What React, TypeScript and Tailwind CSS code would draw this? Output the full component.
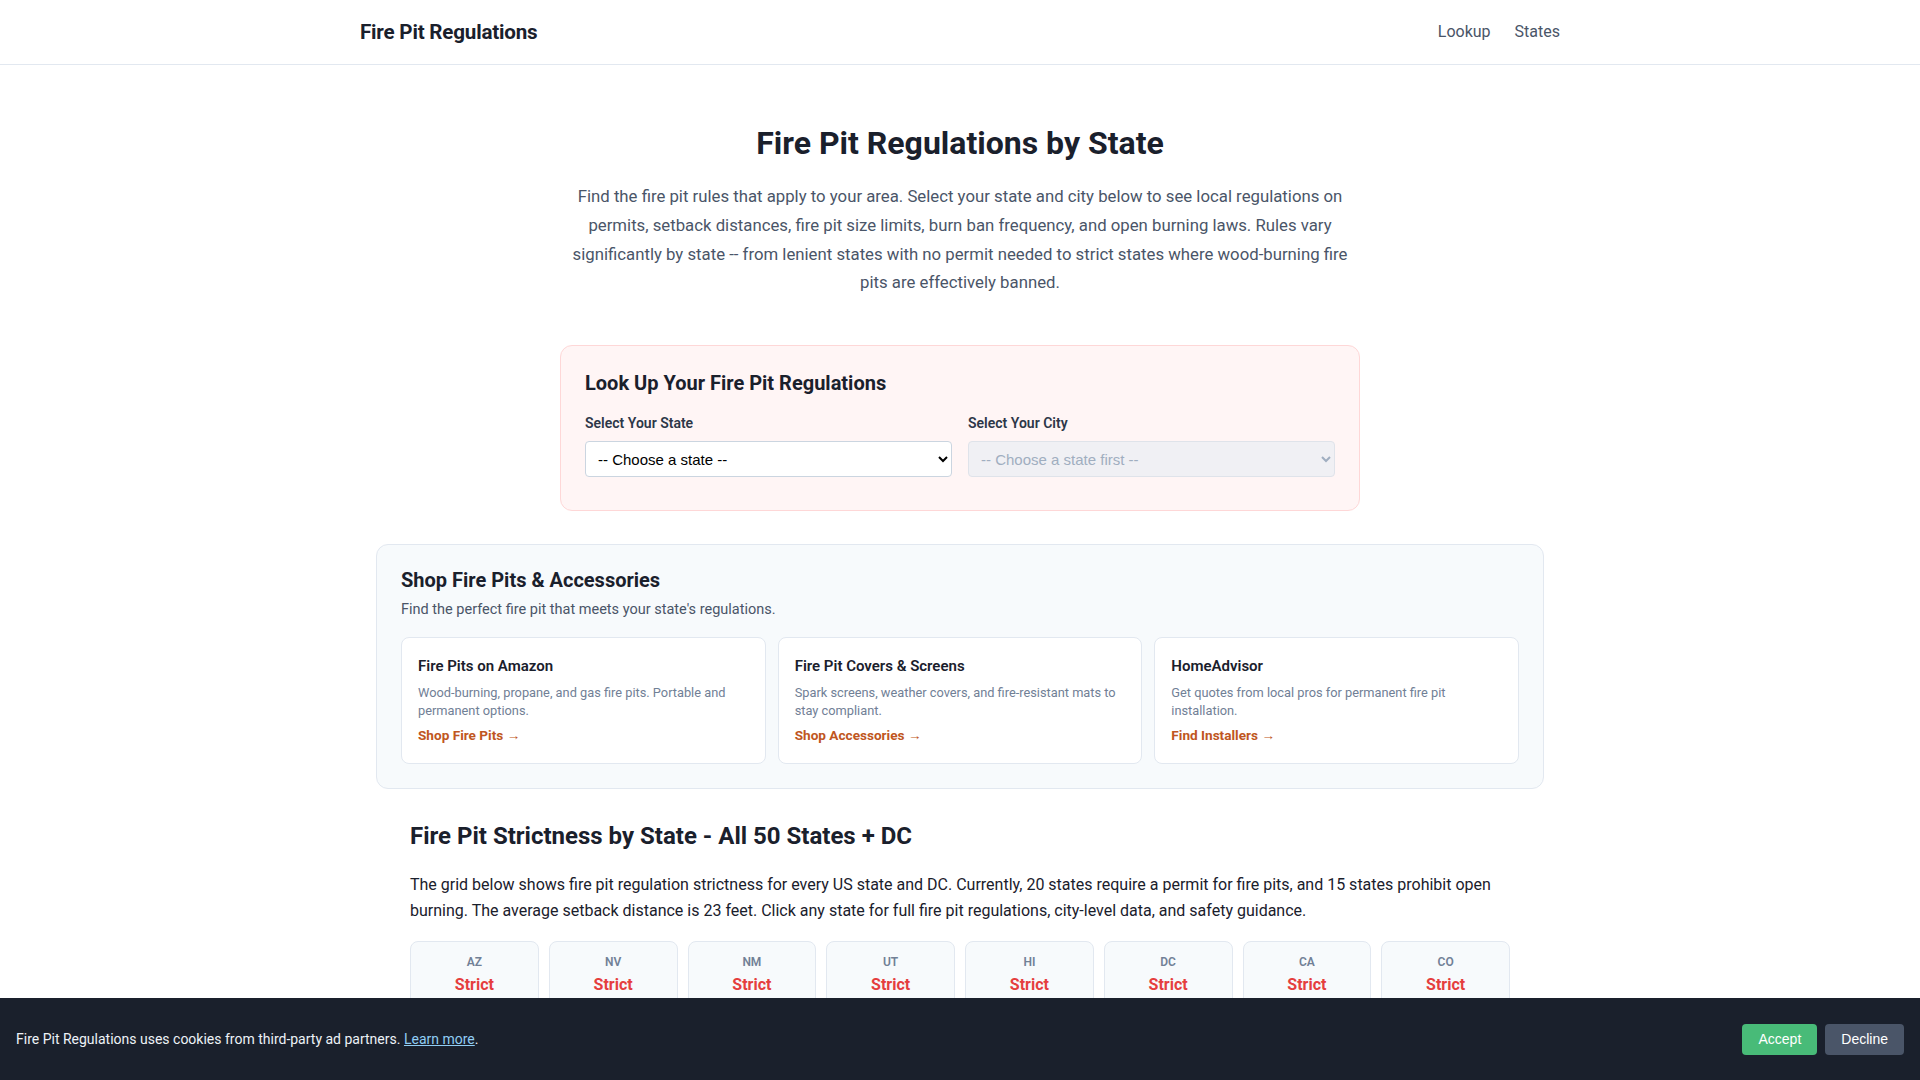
import React from "react";

const SHOP_CARDS = [
  {
    title: "Fire Pits on Amazon",
    body: "Wood-burning, propane, and gas fire pits. Portable and permanent options.",
    cta: "Shop Fire Pits",
  },
  {
    title: "Fire Pit Covers & Screens",
    body: "Spark screens, weather covers, and fire-resistant mats to stay compliant.",
    cta: "Shop Accessories",
  },
  {
    title: "HomeAdvisor",
    body: "Get quotes from local pros for permanent fire pit installation.",
    cta: "Find Installers",
  },
];

const STATES: { code: string; level: "Strict" | "Moderate" | "Lenient" }[] = [
  { code: "AZ", level: "Strict" },
  { code: "NV", level: "Strict" },
  { code: "NM", level: "Strict" },
  { code: "UT", level: "Strict" },
  { code: "HI", level: "Strict" },
  { code: "DC", level: "Strict" },
  { code: "CA", level: "Strict" },
  { code: "CO", level: "Strict" },
  { code: "OR", level: "Strict" },
  { code: "WA", level: "Strict" },
  { code: "ID", level: "Moderate" },
  { code: "MT", level: "Moderate" },
  { code: "WY", level: "Moderate" },
  { code: "TX", level: "Moderate" },
  { code: "OK", level: "Moderate" },
  { code: "KS", level: "Moderate" },
];

const levelColor = {
  Strict: "text-[#e53e3e]",
  Moderate: "text-[#dd6b20]",
  Lenient: "text-[#38a169]",
};

export default function App() {
  return (
    <div className="min-h-screen bg-white font-['Roboto',sans-serif] text-[#1a202c]">
      {/* top bar */}
      <header className="h-[65px] border-b border-[#e2e8f0]">
        <div className="mx-auto flex h-full max-w-[1200px] items-center justify-between">
          <span className="text-[20.6px] font-bold tracking-[-0.2px]">Fire Pit Regulations</span>
          <nav className="flex gap-6 text-base text-[#4a5568]">
            <a href="#lookup">Lookup</a>
            <a href="#states">States</a>
          </nav>
        </div>
      </header>

      <main className="mx-auto max-w-[1200px] px-4 pt-[58px] pb-32">
        <h1 className="text-center text-[32px] leading-10 font-bold">Fire Pit Regulations by State</h1>
        <p className="mx-auto mt-[19px] max-w-[780px] text-center text-[16.75px] leading-[28.8px] text-[#4a5568]">
          Find the fire pit rules that apply to your area. Select your state and city below to see local regulations on
          permits, setback distances, fire pit size limits, burn ban frequency, and open burning laws. Rules vary
          significantly by state -- from lenient states with no permit needed to strict states where wood-burning fire
          pits are effectively banned.
        </p>

        {/* lookup box */}
        <section
          id="lookup"
          className="mx-auto mt-12 max-w-[800px] rounded-xl border border-[#fed7d7] bg-[#fff5f5] px-6 pt-[23px] pb-[33px]"
        >
          <h2 className="text-[20px] leading-7 font-bold">Look Up Your Fire Pit Regulations</h2>
          <div className="mt-[16px] grid grid-cols-2 gap-4">
            <div>
              <label className="block text-sm leading-5 font-semibold text-[#2d3748]">Select Your State</label>
              <select className="mt-[8px] h-9 w-full rounded border border-[#cbd5e0] bg-white px-2 font-['Liberation_Sans',Arial,sans-serif] text-[15px] text-black">
                <option>-- Choose a state --</option>
              </select>
            </div>
            <div>
              <label className="block text-sm leading-5 font-semibold text-[#2d3748]">Select Your City</label>
              <select
                disabled
                className="mt-[8px] h-9 w-full rounded border border-[#dfe3ea] bg-[#f0f0f4] px-2 font-['Liberation_Sans',Arial,sans-serif] text-[15px] text-[#a0aec0]"
              >
                <option>-- Choose a state first --</option>
              </select>
            </div>
          </div>
        </section>

        {/* affiliate block */}
        <section className="mt-[33px] rounded-xl border border-[#e2e8f0] bg-[#f7fafc] px-6 pt-[23px] pb-6">
          <h2 className="text-[20px] leading-6 font-bold">Shop Fire Pits &amp; Accessories</h2>
          <p className="mt-[8px] text-[14.5px] leading-5 text-[#4a5568]">
            Find the perfect fire pit that meets your state's regulations.
          </p>
          <div className="mt-[17px] grid grid-cols-3 gap-3">
            {SHOP_CARDS.map((c) => (
              <div key={c.title} className="rounded-lg border border-[#e2e8f0] bg-white px-4 pt-[17px] pb-[18px]">
                <h3 className="text-[15px] leading-[23px] font-semibold">{c.title}</h3>
                <p className="mt-[6px] text-[12.8px] leading-[18px] text-[#718096]">{c.body}</p>
                <a href="#" className="mt-[5px] block text-[13.6px] leading-5 font-bold text-[#c05621]">
                  {c.cta} →
                </a>
              </div>
            ))}
          </div>
        </section>

        {/* strictness grid */}
        <section id="states" className="mx-auto mt-[31px] max-w-[1100px]">
          <h2 className="text-[24px] leading-8 font-bold">Fire Pit Strictness by State - All 50 States + DC</h2>
          <p className="mt-[20px] text-base leading-[26px] text-[#1a202c]">
            The grid below shows fire pit regulation strictness for every US state and DC. Currently, 20 states require a
            permit for fire pits, and 15 states prohibit open burning. The average setback distance is 23 feet. Click any
            state for full fire pit regulations, city-level data, and safety guidance.
          </p>
          <div className="mt-[17px] grid grid-cols-8 gap-[10px]">
            {STATES.map((s) => (
              <a
                key={s.code}
                href="#"
                className="rounded-lg border border-[#e2e8f0] bg-[#f7fafc] px-2 pt-[12px] pb-3 text-center"
              >
                <div className="text-xs leading-4 font-semibold text-[#718096]">{s.code}</div>
                <div className={`mt-[3px] text-base leading-6 font-bold ${levelColor[s.level]}`}>{s.level}</div>
              </a>
            ))}
          </div>
        </section>
      </main>

      {/* cookie notice */}
      <div className="fixed inset-x-0 bottom-0 flex h-[82px] items-center justify-between bg-[#1a202c] px-4">
        <p className="text-sm text-[#edf2f7]">
          Fire Pit Regulations uses cookies from third-party ad partners.{" "}
          <a href="#" className="text-[#90cdf4] underline">
            Learn more
          </a>
          .
        </p>
        <div className="flex gap-2">
          <button className="h-[31px] rounded bg-[#48bb78] px-4 font-['Liberation_Sans',Arial,sans-serif] text-sm text-white">
            Accept
          </button>
          <button className="h-[31px] rounded bg-[#4a5568] px-4 font-['Liberation_Sans',Arial,sans-serif] text-sm text-white">
            Decline
          </button>
        </div>
      </div>
    </div>
  );
}
